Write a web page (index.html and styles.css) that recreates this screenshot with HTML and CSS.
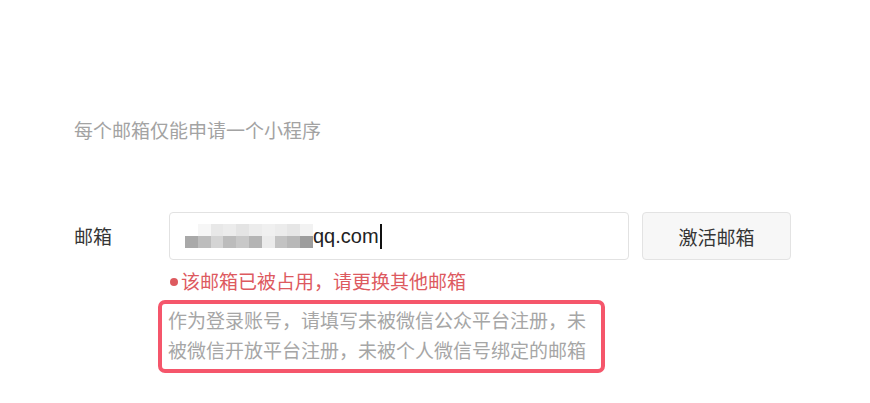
FILE: index.html
```html
<!DOCTYPE html>
<html lang="zh-CN">
<head>
<meta charset="utf-8">
<link rel="stylesheet" href="styles.css">
</head>
<body>
<main class="page">
  <p class="tip">每个邮箱仅能申请一个小程序</p>
  <div class="form-row">
    <label class="label">邮箱</label>
    <div class="field">
      <div class="controls">
        <div class="input">
          <span class="blur">
            <span class="blur-row top"><i></i><i></i><i></i><i></i><i></i><i></i><i></i><i></i><i></i><i></i></span>
            <span class="blur-row bottom"><i></i><i></i><i></i><i></i><i></i><i></i><i></i><i></i><i></i><i></i></span>
          </span><span class="value">qq.com</span><span class="caret"></span>
        </div>
        <button class="btn">激活邮箱</button>
      </div>
      <p class="error"><span class="dot"></span>该邮箱已被占用，请更换其他邮箱</p>
      <p class="hint">作为登录账号，请填写未被微信公众平台注册，未<br>被微信开放平台注册，未被个人微信号绑定的邮箱</p>
    </div>
  </div>
</main>
</body>
</html>
```
FILE: styles.css
```css
* { box-sizing: border-box; }
body {
  margin: 0;
  background: #fff;
  font-family: "Noto Sans CJK SC", "Liberation Sans", sans-serif;
  font-size: 19px;
}
.page { padding: 116px 0 0 74px; }
.tip {
  margin: 0;
  line-height: 28px;
  color: #a3a3a3;
}
.form-row {
  display: flex;
  margin-top: 68px;
}
.label {
  width: 95px;
  flex: none;
  line-height: 48px;
  color: #353535;
}
.controls { display: flex; gap: 13px; }
.input {
  width: 460px;
  height: 48px;
  border: 1px solid #e2e2e2;
  border-radius: 4px;
  display: flex;
  align-items: center;
  padding-left: 15px;
}
.blur {
  display: flex;
  flex-direction: column;
  width: 128px;
  height: 24px;
}
.blur-row { display: flex; height: 12px; }
.blur-row i { width: 12.8px; height: 12px; display: block; }
.blur-row.top i { background: #ececec; }
.blur-row.top i:nth-child(1) { background: #fff; }
.blur-row.top i:nth-child(2) { background: #f6f6f6; }
.blur-row.top i:nth-child(3) { background: #e8e8e8; }
.blur-row.top i:nth-child(5) { background: #e4e4e4; }
.blur-row.top i:nth-child(7) { background: #f0f0f0; }
.blur-row.top i:nth-child(9) { background: #e6e6e6; }
.blur-row.top i:nth-child(10) { background: #f2f2f2; }
.blur-row.bottom i { background: #c8c8c8; }
.blur-row.bottom i:nth-child(1) { background: #a9a9a9; }
.blur-row.bottom i:nth-child(2) { background: #bdbdbd; }
.blur-row.bottom i:nth-child(3) { background: #d4d4d4; }
.blur-row.bottom i:nth-child(4) { background: #bcbcbc; }
.blur-row.bottom i:nth-child(6) { background: #b4b4b4; }
.blur-row.bottom i:nth-child(7) { background: #ebebeb; }
.blur-row.bottom i:nth-child(8) { background: #c3c3c3; }
.blur-row.bottom i:nth-child(9) { background: #b8b8b8; }
.blur-row.bottom i:nth-child(10) { background: #9d9d9d; }
.value {
  font-family: "Liberation Sans", Arial, sans-serif;
  font-size: 20px;
  color: #222;
}
.caret {
  width: 2px;
  height: 25px;
  background: #111;
  margin-left: 1px;
}
.btn {
  width: 149px;
  height: 48px;
  border: 1px solid #e3e3e3;
  border-radius: 4px;
  background: #f7f7f7;
  color: #353535;
  font-family: inherit;
  font-size: 19px;
  padding: 0;
}
.error {
  margin: 7px 0 0;
  line-height: 28px;
  color: #dd5a5f;
  display: flex;
  align-items: center;
}
.dot {
  width: 8px;
  height: 8px;
  border-radius: 50%;
  background: #dd5a5f;
  margin: 1px 3px 0 1px;
}
.hint {
  margin: 5px 0 0 -11px;
  width: 447px;
  border: 4px solid #f5566b;
  border-radius: 7px;
  padding: 1px 0 4px 6px;
  line-height: 30px;
  color: #a6a6a6;
}
```
